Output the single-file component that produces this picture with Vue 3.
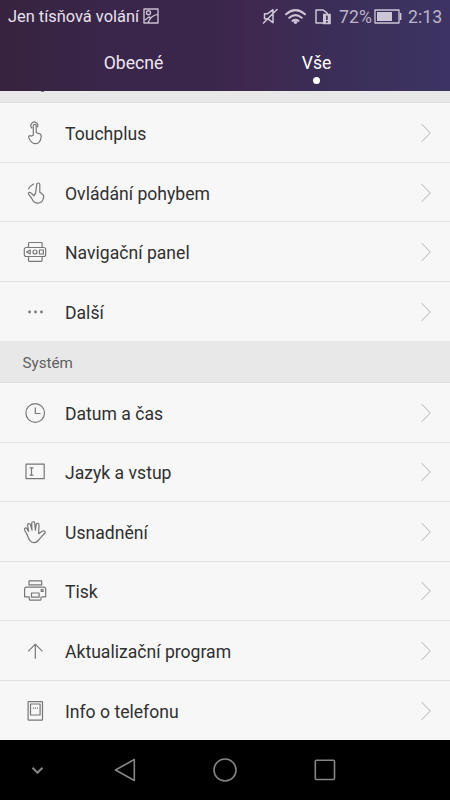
<script setup>
const sections = [
  {
    title: '',
    rows: [
      { icon: 'touch', label: 'Touchplus' },
      { icon: 'motion', label: 'Ovládání pohybem' },
      { icon: 'navbar', label: 'Navigační panel' },
      { icon: 'more', label: 'Další' },
    ],
  },
  {
    title: 'Systém',
    rows: [
      { icon: 'clock', label: 'Datum a čas' },
      { icon: 'input', label: 'Jazyk a vstup' },
      { icon: 'hand', label: 'Usnadnění' },
      { icon: 'print', label: 'Tisk' },
      { icon: 'update', label: 'Aktualizační program' },
      { icon: 'phone', label: 'Info o telefonu' },
    ],
  },
]

const icons = {
  touch:
    'M12.3 16.2V6.8a1.4 1.4 0 0 1 2.9 0v6.8l3.3 1.1c1.5.5 2 1.5 1.7 3.2-.5 4-2.2 6.8-5.6 6.8-3.4 0-4.8-2-6.4-5-1.4-2.6.3-3.8 1.8-2.6zM11.2 9.2A3.4 3.4 0 1 1 16.3 8.2',
  motion:
    'M14.6 14.2L15.8 5.2c.3-1.7 3-1.6 3 .2v7.8l2.8 2.1c1.5 1.2 1.3 2.9.7 4.6-1 2.9-2.8 4.2-5.3 4.2-3.4 0-4.6-1.3-6-4.2L7.7 15.4c-1-1.8.8-2.8 2.2-1.5l3 2.9 1.7-2.6zM7.4 10.2Q9 6.7 13 4.7',
  navbar:
    'M7.5 9.2V5.3q0-.8.8-.8h12q.8 0 .8.8v3.9M7.5 18.8v3.8q0 .8.8.8h12q.8 0 .8-.8v-3.8M5.3 9.5h17.4q2 0 2 2v5q0 2-2 2H5.3q-2 0-2-2v-5q0-2 2-2zM9.2 12v4L5.6 14zM16 14a2 2 0 1 1-4 0a2 2 0 1 1 4 0M18.4 12h4v4h-4z',
  clock: 'M23.5 14a9.3 9.3 0 1 1-18.6 0a9.3 9.3 0 1 1 18.6 0zM14.3 8.5v6h5.2',
  input: 'M5 6.2h18.2v14.5H5zM8.7 9.9h3.7M8.7 17.2h3.7M10.5 9.9v7.3',
  hand:
    'M6.6 17.6L3.6 12c-.8-1.8 1.5-2.8 2.4-1.2l1.6 2.6L6.6 7.3c-.3-1.9 2.4-2.3 2.9-.5l1.5 5.4-.3-7c0-1.9 2.8-2 3-.1l.7 7 .8-5.6c.3-1.8 2.9-1.5 2.8.3l-.4 8.9 3.5-2.4c1.7-1 4.1.5 2.8 1.7l-4.7 5.2c-1.6 2.1-2.9 4.4-5.8 4.4-3.6 0-5.8-2.6-6.8-7z',
  print:
    'M8 3.9h12.7v4H8zM8.3 19.8H3.6V12.2q0-2 2-2h17.1q2 0 2 2v7.6h-4.2M8.3 19.8v2.4q0 1 1 1h9.7q1 0 1-1v-2.4M10.5 16h7.6v4.2h-7.6zM20.2 12.6h1.9v1.9h-1.9z',
  update: 'M14.3 21.7V7.2M7.2 14.3l7.1-7.1 7.1 7.1',
  phone:
    'M7.8 4.6h13q.7 0 .7.7v17.1q0 .7-.7.7h-13q-.7 0-.7-.7V5.3q0-.7.7-.7zM9.5 7h9.6v11H9.5zM11.8 11.2h1.2M13.8 11.2h1.2M15.8 11.2h1.2',
}
</script>

<template>
  <div class="screen">
    <header class="header">
      <div class="status">
        <span class="carrier">Jen tísňová volání</span>
        <svg class="picture" viewBox="0 0 16 16">
          <path d="M1 1h14v14H1zM7.5 4.8a2 2 0 1 1-4 0a2 2 0 1 1 4 0M2 12l4-3 2.5 1.2M5 15C7 9 10 7 15 6.4" />
        </svg>
        <svg class="system" viewBox="0 0 72 20">
          <g class="line">
            <path d="M2.5 7.7h3.2l5.3-4v13l-5.3-4H2.5zM1 17.5L15.5 3" />
            <path class="wave" d="M24 8.2q9.5-8 19 0M27.3 11.8q6.2-5.2 12.4 0M30.5 14.8q3-2.2 6 0" />
            <path d="M62 17H54V4h7.2l4 3.2v2" />
          </g>
          <circle class="solid" cx="33.5" cy="16.2" r="1.7" />
          <path class="solid" fill-rule="evenodd" d="M61 7.8h7.8v10.4H61zM64.1 9.6v4.5h1.6V9.6zM64.1 15.1v1.6h1.6v-1.6z" />
        </svg>
        <span class="percent">72%</span>
        <svg class="battery" viewBox="0 0 28 15">
          <path class="outline" d="M1 1h24v13H1z" />
          <path class="solid" d="M3 3h15v9H3zM25.7 4h1.7v7h-1.7z" />
        </svg>
        <span class="time">2:13</span>
      </div>
      <nav class="tabs">
        <span class="tab">Obecné</span>
        <span class="tab active">Vše</span>
      </nav>
    </header>

    <main class="list">
      <section v-for="section in sections" :key="section.title">
        <h2 :class="['heading', { clipped: !section.title }]">{{ section.title }}</h2>
        <div v-for="row in section.rows" :key="row.label" class="row">
          <svg class="icon" viewBox="0 0 28 28">
            <g v-if="row.icon === 'more'" class="dots">
              <circle cx="8.6" cy="14" r="1.4" />
              <circle cx="14.5" cy="14" r="1.4" />
              <circle cx="20.5" cy="14" r="1.4" />
            </g>
            <path v-else :d="icons[row.icon]" />
          </svg>
          <span class="label">{{ row.label }}</span>
          <svg class="chevron" viewBox="0 0 12 20"><path d="M1.7 1.2L10.3 10l-8.6 8.8" /></svg>
        </div>
      </section>
    </main>

    <footer class="keys">
      <svg class="key hide" viewBox="0 0 28 28"><path d="M9.5 11.8l5 5 5-5" /></svg>
      <svg class="key" viewBox="0 0 28 28"><path d="M23.3 3.5v21L4.5 14z" /></svg>
      <svg class="key" viewBox="0 0 28 28"><circle cx="14" cy="14" r="11" /></svg>
      <svg class="key" viewBox="0 0 28 28"><rect x="4.3" y="4.3" width="19.2" height="19.2" rx="1" /></svg>
    </footer>
  </div>
</template>

<style>
body {
  margin: 0;
}
</style>

<style scoped>
.screen {
  width: 450px;
  height: 800px;
  display: flex;
  flex-direction: column;
  overflow: hidden;
  background: #f7f7f7;
  font-family: Roboto, sans-serif;
}
svg {
  display: block;
  flex: none;
  fill: none;
  stroke-linejoin: round;
}
.header {
  height: 91px;
  flex: none;
  background: linear-gradient(90deg, #37233f 0, #39264a 25%, #3a264b 48%, #40284f 55%, #3b2d56 70%, #3d3464 100%);
}
.status {
  height: 33px;
  display: flex;
  align-items: center;
  padding-left: 8px;
  color: #e8e1ed;
  white-space: nowrap;
}
.carrier {
  width: 131px;
  font-size: 16.4px;
  line-height: 20px;
  padding-top: 1px;
}
.picture {
  width: 16px;
  height: 16px;
  margin-left: 4px;
  margin-bottom: 2px;
  stroke: #c9c0d1;
  stroke-width: 1.4;
}
.system {
  width: 72px;
  height: 20px;
  margin-left: 103px;
  margin-bottom: 2px;
}
.line {
  stroke: #cdc5d5;
  stroke-width: 1.5;
}
.wave {
  stroke-width: 2.1;
  stroke-linecap: round;
}
.solid {
  fill: #cdc5d5;
}
.percent,
.time {
  color: #bdb4c9;
  font-size: 17.7px;
}
.percent {
  width: 34px;
  margin-left: 5px;
}
.battery {
  width: 28px;
  height: 15px;
  margin-left: 1px;
  margin-bottom: 1px;
}
.outline {
  stroke: #cdc5d5;
  stroke-width: 1.3;
}
.time {
  margin-left: 6px;
}
.tabs {
  display: grid;
  grid-template-columns: 183px 183px;
  padding-left: 42px;
}
.tab {
  display: flex;
  flex-direction: column;
  align-items: center;
  padding-top: 18px;
  color: #eee7f2;
  font-size: 17.6px;
  line-height: 24px;
}
.active {
  color: #fff;
}
.active::after {
  content: '';
  width: 7px;
  height: 7px;
  margin-top: 2px;
  border-radius: 50%;
  background: #fff;
}
.list {
  flex: 1;
  min-height: 0;
  overflow: hidden;
}
.heading {
  box-sizing: border-box;
  height: 41.6px;
  margin: 0;
  padding-left: 22.5px;
  background: #e8e8e8;
  border-bottom: 1px solid #e0e0e0;
  color: #606060;
  font-size: 15.2px;
  font-weight: 400;
  line-height: 44px;
}
.clipped {
  height: 12.3px;
}
.clipped::before {
  content: '';
  display: block;
  width: 3px;
  height: 1px;
  margin-left: 18px;
  background: #777;
}
.row {
  box-sizing: border-box;
  height: 59.55px;
  display: flex;
  align-items: center;
  padding: 1px 18px 0 21px;
  border-bottom: 1px solid #e1e1e1;
}
.row:last-child {
  border-bottom-color: transparent;
}
.icon {
  width: 28px;
  height: 28px;
  stroke: #777;
  stroke-width: 1.2;
}
.dots {
  fill: #777;
  stroke: none;
}
.label {
  flex: 1;
  margin-left: 16px;
  padding-top: 2px;
  color: #303030;
  font-size: 17.6px;
}
.chevron {
  width: 12px;
  height: 20px;
  stroke: #b0b0b0;
  stroke-width: 1;
}
.keys {
  height: 60px;
  flex: none;
  display: flex;
  align-items: center;
  gap: 72px;
  padding-left: 23px;
  background: #000;
}
.key {
  width: 28px;
  height: 28px;
  stroke: #858585;
  stroke-width: 1.6;
}
.hide {
  margin-right: -12px;
  stroke-width: 2;
}
</style>
